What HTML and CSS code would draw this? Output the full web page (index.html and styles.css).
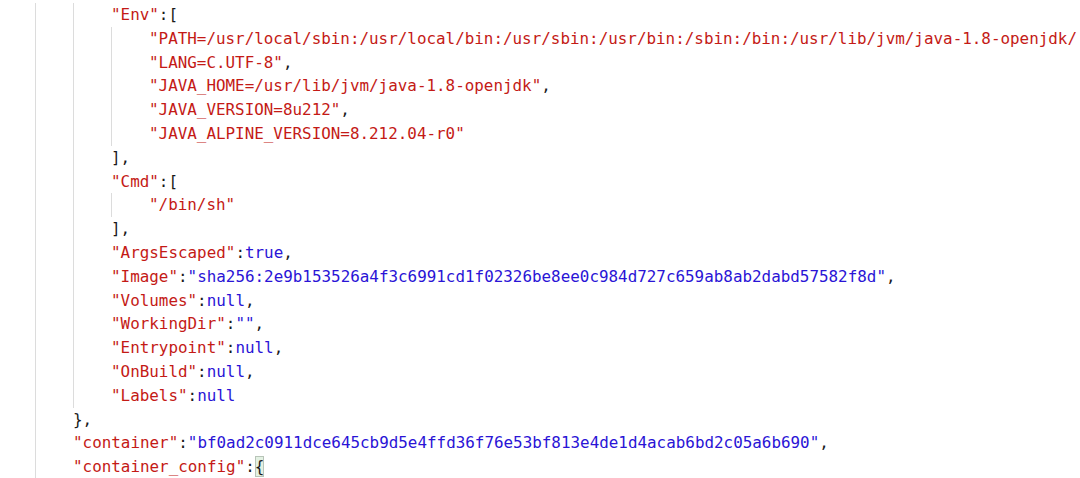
FILE: index.html
```html
<!DOCTYPE html>
<html>
<head>
<meta charset="utf-8">
<link rel="stylesheet" href="styles.css">
</head>
<body>
<div class="code">
  <div class="block outer">
    <div class="block">
      <div class="ln"><span class="k">"Env"</span>:[</div>
      <div class="block">
        <div class="ln"><span class="s">"PATH=/usr/local/sbin:/usr/local/bin:/usr/sbin:/usr/bin:/sbin:/bin:/usr/lib/jvm/java-1.8-openjdk/</span></div>
        <div class="ln"><span class="s">"LANG=C.UTF-8"</span>,</div>
        <div class="ln"><span class="s">"JAVA_HOME=/usr/lib/jvm/java-1.8-openjdk"</span>,</div>
        <div class="ln"><span class="s">"JAVA_VERSION=8u212"</span>,</div>
        <div class="ln"><span class="s">"JAVA_ALPINE_VERSION=8.212.04-r0"</span></div>
      </div>
      <div class="ln">],</div>
      <div class="ln"><span class="k">"Cmd"</span>:[</div>
      <div class="block">
        <div class="ln"><span class="s">"/bin/sh"</span></div>
      </div>
      <div class="ln">],</div>
      <div class="ln"><span class="k">"ArgsEscaped"</span>:<span class="v">true</span>,</div>
      <div class="ln"><span class="k">"Image"</span>:<span class="v">"sha256:2e9b153526a4f3c6991cd1f02326be8ee0c984d727c659ab8ab2dabd57582f8d"</span>,</div>
      <div class="ln"><span class="k">"Volumes"</span>:<span class="v">null</span>,</div>
      <div class="ln"><span class="k">"WorkingDir"</span>:<span class="v">""</span>,</div>
      <div class="ln"><span class="k">"Entrypoint"</span>:<span class="v">null</span>,</div>
      <div class="ln"><span class="k">"OnBuild"</span>:<span class="v">null</span>,</div>
      <div class="ln"><span class="k">"Labels"</span>:<span class="v">null</span></div>
    </div>
    <div class="ln">},</div>
    <div class="ln"><span class="k">"container"</span>:<span class="v">"bf0ad2c0911dce645cb9d5e4ffd36f76e53bf813e4de1d4acab6bd2c05a6b690"</span>,</div>
    <div class="ln"><span class="k">"container_config"</span>:<span class="match">{</span></div>
  </div>
</div>
</body>
</html>
```

FILE: styles.css
```css
html, body {
  margin: 0;
  padding: 0;
  background: #ffffff;
  overflow: hidden;
}
.code {
  font-family: "DejaVu Sans Mono", "Liberation Mono", monospace;
  font-size: 15.9px;
  line-height: 23.8px;
  color: #1a1a1a;
  padding-top: 3px;
}
.block {
  border-left: 1px solid #dcdcdc;
  padding-left: 37px;
}
.outer {
  margin-left: 35px;
}
.ln {
  height: 23.8px;
  white-space: pre;
}
.k, .s {
  color: #c41a16;
}
.v {
  color: #2a14d6;
}
.match {
  background: #e3f1e3;
  outline: 1px solid #b8c4b8;
  outline-offset: -1px;
  padding: 1px 0;
}
```
